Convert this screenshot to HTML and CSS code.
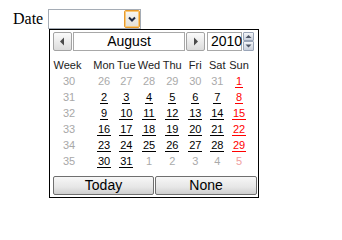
FILE: index.html
```html
<!DOCTYPE html>
<html>
<head>
<meta charset="utf-8">
<link rel="stylesheet" href="styles.css">
</head>
<body>
<div class="page">
  <span class="label">Date</span>
  <div class="picker">
    <div class="combo">
      <span class="drop"><svg width="12" height="14" viewBox="0 0 12 14"><polyline points="3,5.5 6,8.5 9,5.5" fill="none" stroke="#1f2b45" stroke-width="2"/></svg></span>
    </div>
    <div class="popup">
      <div class="head">
        <span class="nav prev"><svg width="17" height="17" viewBox="0 0 17 17"><polygon points="6,8.5 10,4.5 10,12.5" fill="#4a4a4a"/></svg></span>
        <span class="field month">August</span>
        <span class="nav next"><svg width="17" height="17" viewBox="0 0 17 17"><polygon points="11,8.5 7,4.5 7,12.5" fill="#4a4a4a"/></svg></span>
        <span class="field year">2010</span>
        <span class="spin">
          <span class="spin-btn"><svg width="9" height="7" viewBox="0 0 9 7"><polygon points="1.5,5 4.5,2 7.5,5" fill="#4d5566"/></svg></span>
          <span class="spin-btn"><svg width="9" height="8" viewBox="0 0 9 8"><polygon points="1.5,2.5 4.5,5.5 7.5,2.5" fill="#4d5566"/></svg></span>
        </span>
      </div>
      <div class="grid">
        <span class="wk hd">Week</span><span class="hd">Mon</span><span class="hd">Tue</span><span class="hd">Wed</span><span class="hd">Thu</span><span class="hd">Fri</span><span class="hd">Sat</span><span class="hd">Sun</span>

        <span class="wk">30</span><span class="out">26</span><span class="out">27</span><span class="out">28</span><span class="out">29</span><span class="out">30</span><span class="out">31</span><span class="sun"><span class="d">1</span></span>

        <span class="wk">31</span><span><span class="d">2</span></span><span><span class="d">3</span></span><span><span class="d">4</span></span><span><span class="d">5</span></span><span><span class="d">6</span></span><span><span class="d">7</span></span><span class="sun"><span class="d">8</span></span>

        <span class="wk">32</span><span><span class="d">9</span></span><span><span class="d">10</span></span><span><span class="d">11</span></span><span><span class="d">12</span></span><span><span class="d">13</span></span><span><span class="d">14</span></span><span class="sun"><span class="d">15</span></span>

        <span class="wk">33</span><span><span class="d">16</span></span><span><span class="d">17</span></span><span><span class="d">18</span></span><span><span class="d">19</span></span><span><span class="d">20</span></span><span><span class="d">21</span></span><span class="sun"><span class="d">22</span></span>

        <span class="wk">34</span><span><span class="d">23</span></span><span><span class="d">24</span></span><span><span class="d">25</span></span><span><span class="d">26</span></span><span><span class="d">27</span></span><span><span class="d">28</span></span><span class="sun"><span class="d">29</span></span>

        <span class="wk">35</span><span><span class="d">30</span></span><span><span class="d">31</span></span><span class="out">1</span><span class="out">2</span><span class="out">3</span><span class="out">4</span><span class="out sun-out">5</span>
      </div>
      <div class="foot">
        <span class="pbtn today">Today</span>
        <span class="pbtn none">None</span>
      </div>
    </div>
  </div>
</div>
</body>
</html>
```

FILE: styles.css
```css
html, body {
  margin: 0;
  padding: 0;
  background: #fff;
}

.page {
  display: flex;
  align-items: flex-start;
  padding: 9px 0 0 13px;
}

.label {
  width: 35px;
  margin-top: 1px;
  font-family: "Liberation Serif", "Times New Roman", serif;
  font-size: 16px;
  line-height: 18px;
  color: #000;
}

.picker {
  display: flex;
  flex-direction: column;
}

.combo {
  box-sizing: border-box;
  width: 93px;
  height: 20px;
  border: 1px solid #a5acb5;
  background: #fff;
  display: flex;
  justify-content: flex-end;
}

.drop {
  box-sizing: border-box;
  width: 16px;
  height: 18px;
  border: 1px solid #e79a2c;
  box-shadow: inset 0 0 0 1px #f9c978;
  border-radius: 2px;
  background: linear-gradient(#f8f7f3, #e2dfd6);
  display: flex;
  align-items: center;
  justify-content: center;
}

.popup {
  box-sizing: border-box;
  width: 210px;
  height: 169px;
  margin-left: 1px;
  border: 1px solid #000;
  background: #fff;
  padding: 2px 0 2px 0;
  font-family: "Liberation Sans", Arial, sans-serif;
  display: flex;
  flex-direction: column;
}

.head {
  display: flex;
  height: 19px;
  padding-left: 3px;
}

.nav {
  box-sizing: border-box;
  width: 19px;
  height: 19px;
  border: 1px solid #a3a3a3;
  border-radius: 2px;
  background: linear-gradient(#fbfbfb, #dcdcdc);
  display: flex;
  align-items: center;
  justify-content: center;
}

.field {
  box-sizing: border-box;
  height: 19px;
  border: 1px solid #a8a8a8;
  font-size: 14px;
  line-height: 17px;
  color: #000;
}

.prev { margin-right: 1px; }

.month {
  width: 112px;
  margin-right: 1px;
  text-align: center;
}

.next { margin-right: 2px; }

.year {
  width: 35px;
  margin-right: 1px;
  padding-left: 3px;
}

.spin {
  display: flex;
  flex-direction: column;
  width: 11px;
  height: 19px;
}

.spin-btn {
  box-sizing: border-box;
  width: 11px;
  height: 9px;
  border: 1px solid #9aa5b8;
  border-radius: 1px;
  background: linear-gradient(#f4f6f9, #c9d0dc);
  display: flex;
  align-items: center;
  justify-content: center;
}

.spin-btn + .spin-btn {
  height: 10px;
}

.grid {
  margin-top: 6px;
  display: grid;
  grid-template-columns: 43px 22px 22.5px 23px 23.5px 22.5px 21.5px 22px;
  grid-auto-rows: 16px;
  font-size: 11px;
  line-height: 16px;
  text-align: center;
  color: #000;
}

.hd {
  color: #222;
}

.wk {
  padding-right: 5px;
  color: #a8a8a8;
}

.wk.hd {
  color: #222;
  padding-right: 8px;
}

.out {
  color: #aaa;
}

.sun-out {
  color: #f0a0a0;
}

.d {
  padding: 0 1px;
  border-bottom: 1px solid #000;
}

.sun {
  color: #f00;
}

.sun .d {
  border-bottom-color: #f00;
}

.foot {
  margin-top: 7px;
  display: flex;
  padding-left: 3px;
}

.pbtn {
  box-sizing: border-box;
  height: 19px;
  border: 1px solid #6f6f6f;
  border-radius: 2px;
  background: linear-gradient(#f7f7f7, #e6e6e6 60%, #cfcfcf);
  font-size: 14px;
  line-height: 17px;
  text-align: center;
  color: #000;
}

.today {
  width: 101px;
  margin-right: 1px;
}

.none {
  width: 102px;
}
```
